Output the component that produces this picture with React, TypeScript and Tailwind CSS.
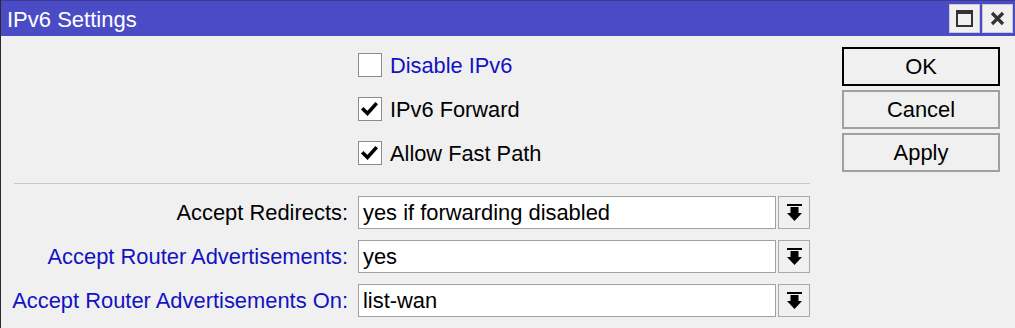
import { useState } from "react";

const font = { fontFamily: '"Liberation Sans", Arial, sans-serif' };

function Check({ checked }: { checked: boolean }) {
  return (
    <div className="w-[24px] h-[24px] bg-white border border-[#8c8c8c] flex items-center justify-center shrink-0">
      {checked && (
        <svg width="22" height="22" viewBox="0 0 22 22">
          <path d="M4.5 11.5 L8.5 15.5 L16.5 6.5" fill="none" stroke="#000" strokeWidth="3.6" strokeLinecap="square" />
        </svg>
      )}
    </div>
  );
}

function DropArrow() {
  return (
    <svg width="15" height="17" viewBox="0 0 15 17">
      <rect x="0" y="0" width="15" height="2" fill="#000" />
      <rect x="3.5" y="3" width="8" height="6.5" fill="#000" />
      <polygon points="0,9 15,9 7.5,17" fill="#000" />
    </svg>
  );
}

const checks = [
  { label: "Disable IPv6", blue: true, checked: false },
  { label: "IPv6 Forward", blue: false, checked: true },
  { label: "Allow Fast Path", blue: false, checked: true },
];

const fields = [
  { label: "Accept Redirects:", value: "yes if forwarding disabled", blue: false },
  { label: "Accept Router Advertisements:", value: "yes", blue: true },
  { label: "Accept Router Advertisements On:", value: "list-wan", blue: true },
];

export default function App() {
  const [state, setState] = useState(checks.map((c) => c.checked));

  return (
    <div className="w-[1015px] h-[328px] bg-[#f0f0f0] border-l border-[#2b2b2b] overflow-hidden" style={font}>
      {/* title bar */}
      <div className="h-[36px] bg-[#4b4bc6] border-t border-[#3a3a90] flex items-start justify-between">
        <div className="pl-[6px] pt-[1px] text-white text-[22px] leading-[36px]">IPv6 Settings</div>
        <div className="flex gap-[2px] pt-[3px] pr-[2px]">
          <div className="w-[31px] h-[29px] bg-[#f0f0f0] border border-[#c8c8d8] flex items-center justify-center">
            <div className="w-[17px] h-[17px] border-[2.5px] border-t-[4px] border-[#333]" />
          </div>
          <div className="w-[31px] h-[29px] bg-[#f0f0f0] border border-[#c8c8d8] flex items-center justify-center">
            <svg width="15" height="15" viewBox="0 0 15 15">
              <path d="M2 2 L13 13 M13 2 L2 13" stroke="#333" strokeWidth="3.2" />
            </svg>
          </div>
        </div>
      </div>

      <div className="flex">
        <div className="w-[809px] pl-[13px]">
          <div className="pl-[344px] pt-[17px] flex flex-col gap-[20px]">
            {checks.map((c, i) => (
              <div
                key={c.label}
                className="h-[24px] flex items-center gap-[8px] cursor-default"
                onClick={() => setState((s) => s.map((v, j) => (j === i ? !v : v)))}
              >
                <Check checked={state[i]} />
                <span className={`text-[21.8px] leading-[24px] pt-[1px] ${c.blue ? "text-[#1212c2]" : "text-black"}`}>
                  {c.label}
                </span>
              </div>
            ))}
          </div>

          <div className="mt-[18px] h-[1px] bg-[#c6c6c6]" />

          <div className="mt-[12px] grid grid-cols-[334px_1fr] gap-x-[10px] gap-y-[11px]">
            {fields.map((f) => (
              <div key={f.label} className="contents">
                <div className={`h-[33px] pt-[2px] flex items-center justify-end text-[21.9px] whitespace-nowrap ${f.blue ? "text-[#1212c2]" : "text-black"}`}>
                  {f.label}
                </div>
                <div className="h-[33px] flex gap-[2px]">
                  <div className="w-[418px] bg-white border border-[#a0a0a0] flex items-center pl-[4px] pt-[2px] text-[21.9px] text-black whitespace-nowrap">
                    {f.value}
                  </div>
                  <div className="w-[32px] border border-[#a8a8a8] bg-[#f0f0f0] flex items-center justify-center">
                    <DropArrow />
                  </div>
                </div>
              </div>
            ))}
          </div>
        </div>

        <div className="ml-[32px] pt-[11px] flex flex-col gap-[4px]">
          <button className="w-[158px] h-[39px] pt-[2px] border-2 border-black bg-[#f0f0f0] text-[21.9px] text-black">OK</button>
          <button className="w-[158px] h-[39px] pt-[2px] border-2 border-[#a0a0a0] bg-[#f0f0f0] text-[21.9px] text-black">Cancel</button>
          <button className="w-[158px] h-[39px] pt-[2px] border-2 border-[#a0a0a0] bg-[#f0f0f0] text-[21.9px] text-black">Apply</button>
        </div>
      </div>
    </div>
  );
}
